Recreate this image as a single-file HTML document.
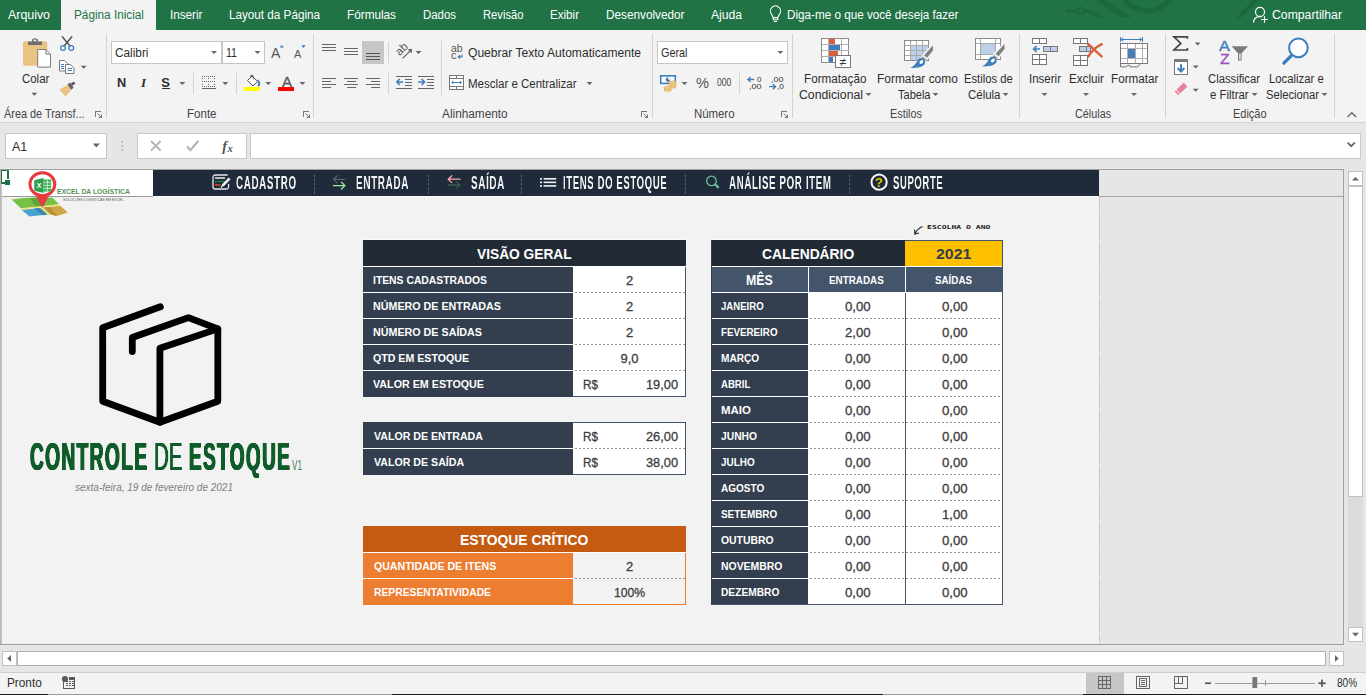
<!DOCTYPE html>
<html lang="pt-BR"><head><meta charset="utf-8"><title>Controle de Estoque</title>
<style>
html,body{margin:0;padding:0;width:1366px;height:695px;overflow:hidden;background:#e6e6e6}
body{position:relative;font-family:'Liberation Sans', sans-serif}
svg.bg{position:absolute;left:0;top:0}
.t{position:absolute;white-space:pre;transform-origin:0 50%}
</style></head><body>
<svg class="bg" width="1366" height="695" viewBox="0 0 1366 695">
<g shape-rendering="crispEdges">
<rect x="0" y="0" width="1366" height="695" fill="#e6e6e6" />
<rect x="0" y="0" width="1366" height="30" fill="#217346" />
<rect x="61" y="0" width="95" height="30" fill="#f3f3f3" />
<rect x="0" y="30" width="1366" height="92" fill="#f3f3f3" />
<rect x="0" y="122" width="1366" height="1" fill="#d4d4d4" />
<rect x="5.5" y="133.5" width="101" height="25" fill="#fff" stroke="#c8c8c8" stroke-width="1"/>
<rect x="137.5" y="133.5" width="109" height="25" fill="#fff" stroke="#c8c8c8" stroke-width="1"/>
<rect x="250.5" y="133.5" width="1110" height="25" fill="#fff" stroke="#c8c8c8" stroke-width="1"/>
<rect x="0" y="169" width="1344" height="476" fill="#a0a0a0" />
<rect x="0" y="170" width="1" height="474" fill="#b8b8b8" />
<rect x="1" y="170" width="1098" height="474" fill="#f2f2f2" />
<rect x="1" y="170" width="1" height="474" fill="#c4c4c4" />
<rect x="1099" y="170" width="244" height="474" fill="#e6e6e6" />
<rect x="1099" y="197" width="1" height="447" fill="#cbcbcb" />
<rect x="1099" y="212" width="1" height="1" fill="#f2f2f2" />
<rect x="1099" y="240" width="1" height="1" fill="#f2f2f2" />
<rect x="1099" y="268" width="1" height="1" fill="#f2f2f2" />
<rect x="1099" y="296" width="1" height="1" fill="#f2f2f2" />
<rect x="1099" y="324" width="1" height="1" fill="#f2f2f2" />
<rect x="1099" y="352" width="1" height="1" fill="#f2f2f2" />
<rect x="1099" y="380" width="1" height="1" fill="#f2f2f2" />
<rect x="1099" y="408" width="1" height="1" fill="#f2f2f2" />
<rect x="1099" y="436" width="1" height="1" fill="#f2f2f2" />
<rect x="1099" y="464" width="1" height="1" fill="#f2f2f2" />
<rect x="1099" y="492" width="1" height="1" fill="#f2f2f2" />
<rect x="1099" y="520" width="1" height="1" fill="#f2f2f2" />
<rect x="1099" y="548" width="1" height="1" fill="#f2f2f2" />
<rect x="1099" y="576" width="1" height="1" fill="#f2f2f2" />
<rect x="1099" y="604" width="1" height="1" fill="#f2f2f2" />
<rect x="1099" y="632" width="1" height="1" fill="#f2f2f2" />
<rect x="2" y="196" width="1341" height="1" fill="#a6a6a6" />
<rect x="2" y="196" width="151" height="1" fill="#9a9a9a" />
<rect x="2" y="170" width="151" height="26" fill="#ffffff" />
<rect x="153" y="170" width="946" height="26" fill="#1f2a3b" />
<rect x="153" y="196" width="946" height="1" fill="#fbfbfb" />
<rect x="0" y="672" width="1366" height="1" fill="#cdcdcd" />
<rect x="0" y="673" width="1366" height="22" fill="#f3f3f3" />
<rect x="1086" y="673" width="38" height="21" fill="#c6c6c6" />
</g>
<g shape-rendering="crispEdges">
<rect x="363" y="239" width="323" height="1" fill="#fafafa" />
<rect x="711" y="239" width="194" height="1" fill="#fafafa" />
<rect x="363" y="240" width="323" height="26" fill="#222b35" />
<rect x="363" y="267" width="210" height="26" fill="#333f4f" />
<rect x="573" y="267" width="113" height="26" fill="#fff" />
<rect x="363" y="266" width="210" height="1" fill="#fff" />
<rect x="363" y="293" width="210" height="26" fill="#333f4f" />
<rect x="573" y="293" width="113" height="26" fill="#fff" />
<rect x="363" y="292" width="210" height="1" fill="#fff" />
<line x1="573" y1="292.5" x2="686" y2="292.5" stroke="#969696" stroke-width="1" stroke-dasharray="2 2" stroke-dashoffset="2"/>
<rect x="363" y="319" width="210" height="26" fill="#333f4f" />
<rect x="573" y="319" width="113" height="26" fill="#fff" />
<rect x="363" y="318" width="210" height="1" fill="#fff" />
<line x1="573" y1="318.5" x2="686" y2="318.5" stroke="#969696" stroke-width="1" stroke-dasharray="2 2" stroke-dashoffset="2"/>
<rect x="363" y="345" width="210" height="26" fill="#333f4f" />
<rect x="573" y="345" width="113" height="26" fill="#fff" />
<rect x="363" y="344" width="210" height="1" fill="#fff" />
<line x1="573" y1="344.5" x2="686" y2="344.5" stroke="#969696" stroke-width="1" stroke-dasharray="2 2" stroke-dashoffset="2"/>
<rect x="363" y="371" width="210" height="26" fill="#333f4f" />
<rect x="573" y="371" width="113" height="26" fill="#fff" />
<rect x="363" y="370" width="210" height="1" fill="#fff" />
<line x1="573" y1="370.5" x2="686" y2="370.5" stroke="#969696" stroke-width="1" stroke-dasharray="2 2" stroke-dashoffset="2"/>
<rect x="363" y="266" width="323" height="1" fill="#fff" />
<rect x="685" y="267" width="1" height="130" fill="#44546a" />
<rect x="573" y="396" width="113" height="1" fill="#44546a" />
<rect x="363" y="396" width="210" height="1" fill="#333f4f" />
<rect x="363" y="422" width="210" height="26" fill="#333f4f" />
<rect x="573" y="422" width="113" height="26" fill="#fff" />
<rect x="363" y="449" width="210" height="26" fill="#333f4f" />
<rect x="573" y="449" width="113" height="26" fill="#fff" />
<rect x="363" y="448" width="210" height="1" fill="#fff" />
<rect x="573" y="448" width="113" height="1" fill="#fff" />
<line x1="573" y1="448.5" x2="686" y2="448.5" stroke="#969696" stroke-width="1" stroke-dasharray="2 2" stroke-dashoffset="2"/>
<rect x="573" y="422" width="113" height="1" fill="#44546a" />
<rect x="685" y="422" width="1" height="53" fill="#44546a" />
<rect x="573" y="474" width="113" height="1" fill="#44546a" />
<rect x="363" y="526" width="323" height="26" fill="#c55a11" />
<rect x="363" y="552" width="323" height="1" fill="#fff" />
<rect x="363" y="553" width="210" height="25" fill="#ed7d31" />
<rect x="363" y="578" width="210" height="1" fill="#fff" />
<rect x="363" y="579" width="210" height="26" fill="#ed7d31" />
<rect x="573" y="553" width="113" height="52" fill="#f2f2f2" />
<line x1="573" y1="578.5" x2="686" y2="578.5" stroke="#969696" stroke-width="1" stroke-dasharray="2 2" stroke-dashoffset="2"/>
<rect x="685" y="553" width="1" height="52" fill="#ed7d31" />
<rect x="573" y="604" width="113" height="1" fill="#ed7d31" />
<rect x="711" y="240" width="194" height="26" fill="#222b35" />
<rect x="905" y="240" width="98" height="26" fill="#ffc000" />
<rect x="711" y="266" width="292" height="1" fill="#fff" />
<rect x="711" y="267" width="292" height="26" fill="#44546a" />
<rect x="808" y="267" width="1" height="26" fill="#fff" />
<rect x="905" y="267" width="1" height="26" fill="#fff" />
<rect x="711" y="293" width="97" height="312" fill="#333f4f" />
<rect x="808" y="293" width="195" height="312" fill="#fff" />
<rect x="711" y="292" width="97" height="1" fill="#fff" />
<rect x="711" y="318" width="97" height="1" fill="#fff" />
<line x1="808" y1="318.5" x2="1003" y2="318.5" stroke="#969696" stroke-width="1" stroke-dasharray="2 2" stroke-dashoffset="2"/>
<rect x="711" y="344" width="97" height="1" fill="#fff" />
<line x1="808" y1="344.5" x2="1003" y2="344.5" stroke="#969696" stroke-width="1" stroke-dasharray="2 2" stroke-dashoffset="2"/>
<rect x="711" y="370" width="97" height="1" fill="#fff" />
<line x1="808" y1="370.5" x2="1003" y2="370.5" stroke="#969696" stroke-width="1" stroke-dasharray="2 2" stroke-dashoffset="2"/>
<rect x="711" y="396" width="97" height="1" fill="#fff" />
<line x1="808" y1="396.5" x2="1003" y2="396.5" stroke="#969696" stroke-width="1" stroke-dasharray="2 2" stroke-dashoffset="2"/>
<rect x="711" y="422" width="97" height="1" fill="#fff" />
<line x1="808" y1="422.5" x2="1003" y2="422.5" stroke="#969696" stroke-width="1" stroke-dasharray="2 2" stroke-dashoffset="2"/>
<rect x="711" y="448" width="97" height="1" fill="#fff" />
<line x1="808" y1="448.5" x2="1003" y2="448.5" stroke="#969696" stroke-width="1" stroke-dasharray="2 2" stroke-dashoffset="2"/>
<rect x="711" y="474" width="97" height="1" fill="#fff" />
<line x1="808" y1="474.5" x2="1003" y2="474.5" stroke="#969696" stroke-width="1" stroke-dasharray="2 2" stroke-dashoffset="2"/>
<rect x="711" y="500" width="97" height="1" fill="#fff" />
<line x1="808" y1="500.5" x2="1003" y2="500.5" stroke="#969696" stroke-width="1" stroke-dasharray="2 2" stroke-dashoffset="2"/>
<rect x="711" y="526" width="97" height="1" fill="#fff" />
<line x1="808" y1="526.5" x2="1003" y2="526.5" stroke="#969696" stroke-width="1" stroke-dasharray="2 2" stroke-dashoffset="2"/>
<rect x="711" y="552" width="97" height="1" fill="#fff" />
<line x1="808" y1="552.5" x2="1003" y2="552.5" stroke="#969696" stroke-width="1" stroke-dasharray="2 2" stroke-dashoffset="2"/>
<rect x="711" y="578" width="97" height="1" fill="#fff" />
<line x1="808" y1="578.5" x2="1003" y2="578.5" stroke="#969696" stroke-width="1" stroke-dasharray="2 2" stroke-dashoffset="2"/>
<rect x="711" y="292" width="292" height="1" fill="#fff" />
<rect x="905" y="293" width="1" height="312" fill="#44546a" />
<rect x="1002" y="240" width="1" height="365" fill="#44546a" />
<rect x="905" y="240" width="98" height="1" fill="#44546a" />
<rect x="711" y="604" width="292" height="1" fill="#44546a" />
<rect x="711" y="240" width="1" height="365" fill="#333f4f" />
</g>
<g fill="none" stroke="#000" stroke-width="6.8" stroke-linecap="round" stroke-linejoin="round"><path d="M160.3 306.8 L102.7 327.8 L102.7 401.2 L159.9 422.2 L217.8 401.2 L217.8 328.9 L188.4 317.6 L132.3 337.5 L132.3 351.5"/><path d="M159.9 422.2 L159.9 348.3 L217.8 328.9"/></g>
<line x1="314.5" y1="174.5" x2="314.5" y2="194" stroke="#566071" stroke-width="1" stroke-dasharray="3 1.2"/>
<line x1="428.4" y1="174.5" x2="428.4" y2="194" stroke="#566071" stroke-width="1" stroke-dasharray="3 1.2"/>
<line x1="521.4" y1="174.5" x2="521.4" y2="194" stroke="#566071" stroke-width="1" stroke-dasharray="3 1.2"/>
<line x1="685.3" y1="174.5" x2="685.3" y2="194" stroke="#566071" stroke-width="1" stroke-dasharray="3 1.2"/>
<line x1="849.7" y1="174.5" x2="849.7" y2="194" stroke="#566071" stroke-width="1" stroke-dasharray="3 1.2"/>
<g fill="none" stroke="#e8e8e8" stroke-width="1.3" stroke-linecap="round" stroke-linejoin="round"><path d="M227.2 175 H215.2 a2.2 2.2 0 0 0 -2.2 2.2 V186.8 a2.2 2.2 0 0 0 2.2 2.2 H226.4 a2.2 2.2 0 0 0 2.2 -2.2 V184.5"/><path d="M215.5 178 H224.5" stroke="#f0f0f0" stroke-width="1.5"/><path d="M215.5 181.5 H224" stroke="#1f7a3a" stroke-width="1.7"/><path d="M215.5 185 H220" stroke="#e8413b" stroke-width="1.7"/><path d="M222.6 185.6 L229.6 178.4" stroke="#f2f2f2" stroke-width="2.6" stroke-linecap="butt"/><path d="M221.3 187 L222.8 185.4" stroke="#f2f2f2" stroke-width="1.2"/></g>
<path d="M333.4 179.4 H345 M345 179.4 l-3.6 3.4 M345 179.4 l-3.6 -3.4" transform="scale(-1,1) translate(-678.4,0)" fill="none" stroke="#5c5f66" stroke-width="1.3" stroke-linecap="round"/>
<path d="M333.4 185.6 H345 M345 185.6 l-3.6 3.4 M345 185.6 l-3.6 -3.4" fill="none" stroke="#9aee9a" stroke-width="1.3" stroke-linecap="round"/>
<path d="M448.2 179.2 H460 M460 179.2 l-3.6 3.4 M460 179.2 l-3.6 -3.4" transform="scale(-1,1) translate(-908.2,0)" fill="none" stroke="#f2a9a9" stroke-width="1.3" stroke-linecap="round"/>
<path d="M448.2 185 H460 M460 185 l-3.6 3.4 M460 185 l-3.6 -3.4" fill="none" stroke="#3d5c52" stroke-width="1.3" stroke-linecap="round"/>
<rect x="540" y="178.0" width="2" height="1.6" fill="#f4f4f4" />
<rect x="543.6" y="178.0" width="12.6" height="1.6" fill="#f4f4f4" />
<rect x="540" y="181.54999999999998" width="2" height="1.6" fill="#f4f4f4" />
<rect x="543.6" y="181.54999999999998" width="12.6" height="1.6" fill="#f4f4f4" />
<rect x="540" y="185.1" width="2" height="1.6" fill="#f4f4f4" />
<rect x="543.6" y="185.1" width="12.6" height="1.6" fill="#f4f4f4" />
<circle cx="711.5" cy="180.9" r="4.8" fill="none" stroke="#6dbf9a" stroke-width="1.3"/><path d="M715.6 184.9 L718 187.1" stroke="#6dbf9a" stroke-width="2.4" stroke-linecap="round"/>
<circle cx="879.1" cy="182.2" r="7.6" fill="none" stroke="#f8f8f8" stroke-width="2"/>
<rect x="106" y="34" width="1" height="84" fill="#d4d4d4" shape-rendering="crispEdges"/>
<rect x="313" y="34" width="1" height="84" fill="#d4d4d4" shape-rendering="crispEdges"/>
<rect x="652" y="34" width="1" height="84" fill="#d4d4d4" shape-rendering="crispEdges"/>
<rect x="792" y="34" width="1" height="84" fill="#d4d4d4" shape-rendering="crispEdges"/>
<rect x="1019" y="34" width="1" height="84" fill="#d4d4d4" shape-rendering="crispEdges"/>
<rect x="1165" y="34" width="1" height="84" fill="#d4d4d4" shape-rendering="crispEdges"/>
<rect x="1334" y="34" width="1" height="84" fill="#d4d4d4" shape-rendering="crispEdges"/>
<rect x="193" y="73" width="1" height="21" fill="#d4d4d4" shape-rendering="crispEdges"/>
<rect x="236" y="73" width="1" height="21" fill="#d4d4d4" shape-rendering="crispEdges"/>
<rect x="388" y="42" width="1" height="21" fill="#d4d4d4" shape-rendering="crispEdges"/>
<rect x="388" y="73" width="1" height="21" fill="#d4d4d4" shape-rendering="crispEdges"/>
<rect x="441" y="41" width="1" height="54" fill="#d4d4d4" shape-rendering="crispEdges"/>
<rect x="739" y="73" width="1" height="21" fill="#d4d4d4" shape-rendering="crispEdges"/>
<path d="M95.5 117 v-5.5 h5.5" fill="none" stroke="#777" stroke-width="1" shape-rendering="crispEdges"/>
<path d="M97.6 113.6 l3.6 3.6 M101.5 117.7 v-3 M101.7 117.5 h-3" fill="none" stroke="#777" stroke-width="1"/>
<path d="M303.5 117 v-5.5 h5.5" fill="none" stroke="#777" stroke-width="1" shape-rendering="crispEdges"/>
<path d="M305.6 113.6 l3.6 3.6 M309.5 117.7 v-3 M309.7 117.5 h-3" fill="none" stroke="#777" stroke-width="1"/>
<path d="M641.5 117 v-5.5 h5.5" fill="none" stroke="#777" stroke-width="1" shape-rendering="crispEdges"/>
<path d="M643.6 113.6 l3.6 3.6 M647.5 117.7 v-3 M647.7 117.5 h-3" fill="none" stroke="#777" stroke-width="1"/>
<path d="M781.5 117 v-5.5 h5.5" fill="none" stroke="#777" stroke-width="1" shape-rendering="crispEdges"/>
<path d="M783.6 113.6 l3.6 3.6 M787.5 117.7 v-3 M787.7 117.5 h-3" fill="none" stroke="#777" stroke-width="1"/>
<path d="M1347.5 117 l4.3 -4.3 l4.3 4.3" fill="none" stroke="#666" stroke-width="1.4"/>
<rect x="23" y="41.2" width="24.2" height="24.6" rx="2" fill="#eac282"/>
<path d="M28 44.9 v-2.4 q0 -1 1 -1 h3 v-1.2 q0 -2 3 -2 q3 0 3 2 v1.2 h3 q1 0 1 1 v2.4z" fill="#6e6e6e"/><rect x="33.6" y="39.6" width="2.8" height="1.6" fill="#f3f3f3"/>
<path d="M37.7 49.5 h8.2 l4.6 4.6 v13 h-12.8z" fill="#fff" stroke="#7d7d7d" stroke-width="1"/><path d="M45.9 49.5 v4.6 h4.6" fill="none" stroke="#7d7d7d" stroke-width="1"/>
<path d="M31.4 92.7 h6 l-3 3z" fill="#666"/>
<path d="M62.3 36.8 L70 46 M71.8 36.8 L64.1 46" stroke="#555" stroke-width="1.5" fill="none" stroke-linecap="round"/><circle cx="63" cy="48" r="2.4" fill="none" stroke="#3e7ebd" stroke-width="1.2"/><circle cx="71.2" cy="48" r="2.4" fill="none" stroke="#3e7ebd" stroke-width="1.2"/>
<g fill="#fff" stroke="#777" stroke-width="1"><path d="M59.5 60.5 h5 l3 3 v7.5 h-8z"/><path d="M65.5 64.5 h5 l3.5 3.5 v5.5 h-8.5z"/></g><path d="M61 64.5 h3 M61 66.5 h3 M61 68.5 h3 M67.5 68.5 h4.5 M67.5 70.5 h4.5" stroke="#3e7ebd" stroke-width="1" fill="none"/>
<path d="M80.6 65.7 h6 l-3 3z" fill="#666"/>
<path d="M59.3 89.6 L68 84.8 L71 90.2 L65.5 96.6z" fill="#eac282"/><path d="M67.5 84.6 l2.6 -2 l3.6 5.2 l-2.6 2z" fill="#666"/><path d="M70.8 83.6 l3 -2.2 l1.6 2.2 l-3 2.2z" fill="#555"/>
<rect x="111.5" y="41.5" width="110" height="22" fill="#fff" stroke="#c6c6c6" stroke-width="1"/>
<rect x="222.5" y="41.5" width="42" height="22" fill="#fff" stroke="#c6c6c6" stroke-width="1"/>
<path d="M211 51.1 h6 l-3 3z" fill="#666"/>
<path d="M254.5 51.1 h6 l-3 3z" fill="#666"/>
<path d="M279.5 47.6 l2.2 -2.6 l2.2 2.6z" fill="#3e7ebd"/>
<path d="M301.3 45.3 h4.4 l-2.2 2.6z" fill="#3e7ebd"/>
<rect x="162" y="88.4" width="8" height="1" fill="#2e2e2e" shape-rendering="crispEdges"/>
<path d="M179.3 82.0 h6 l-3 3z" fill="#666"/>
<g shape-rendering="crispEdges" fill="#6a6a6a">
<rect x="202" y="76" width="1" height="1" fill="#6a6a6a" />
<rect x="204" y="76" width="1" height="1" fill="#6a6a6a" />
<rect x="206" y="76" width="1" height="1" fill="#6a6a6a" />
<rect x="208" y="76" width="1" height="1" fill="#6a6a6a" />
<rect x="210" y="76" width="1" height="1" fill="#6a6a6a" />
<rect x="212" y="76" width="1" height="1" fill="#6a6a6a" />
<rect x="214" y="76" width="1" height="1" fill="#6a6a6a" />
<rect x="202" y="81" width="1" height="1" fill="#6a6a6a" />
<rect x="204" y="81" width="1" height="1" fill="#6a6a6a" />
<rect x="206" y="81" width="1" height="1" fill="#6a6a6a" />
<rect x="208" y="81" width="1" height="1" fill="#6a6a6a" />
<rect x="210" y="81" width="1" height="1" fill="#6a6a6a" />
<rect x="212" y="81" width="1" height="1" fill="#6a6a6a" />
<rect x="214" y="81" width="1" height="1" fill="#6a6a6a" />
<rect x="202" y="86" width="1" height="1" fill="#6a6a6a" />
<rect x="204" y="86" width="1" height="1" fill="#6a6a6a" />
<rect x="206" y="86" width="1" height="1" fill="#6a6a6a" />
<rect x="208" y="86" width="1" height="1" fill="#6a6a6a" />
<rect x="210" y="86" width="1" height="1" fill="#6a6a6a" />
<rect x="212" y="86" width="1" height="1" fill="#6a6a6a" />
<rect x="214" y="86" width="1" height="1" fill="#6a6a6a" />
<rect x="202" y="78" width="1" height="1" fill="#6a6a6a" />
<rect x="208" y="78" width="1" height="1" fill="#6a6a6a" />
<rect x="214" y="78" width="1" height="1" fill="#6a6a6a" />
<rect x="202" y="84" width="1" height="1" fill="#6a6a6a" />
<rect x="208" y="84" width="1" height="1" fill="#6a6a6a" />
<rect x="214" y="84" width="1" height="1" fill="#6a6a6a" />
<rect x="202" y="88" width="14" height="1.3" fill="#666" />
</g>
<path d="M222.3 82.0 h6 l-3 3z" fill="#666"/>
<path d="M247.5 80.5 l4.5 -4.5 l5.5 5.5 l-4.5 4.5z" fill="#fff" stroke="#555" stroke-width="1"/><path d="M250.6 78 v-1.6 a1.3 1.3 0 0 1 2.6 0 v2.8" fill="none" stroke="#555" stroke-width="1"/><path d="M256.8 79.2 Q260.8 80.6 260.1 84.4 Q259.5 86.6 257.6 86.8 Q258.9 82.6 256.8 79.2z" fill="#3e7ebd"/>
<rect x="244" y="87" width="16" height="4" fill="#ffff00" shape-rendering="crispEdges"/>
<path d="M265.3 82.0 h6 l-3 3z" fill="#666"/>
<rect x="278" y="87" width="16" height="4" fill="#ff0000" shape-rendering="crispEdges"/>
<path d="M299.4 82.0 h6 l-3 3z" fill="#666"/>
<rect x="322" y="44" width="14" height="1" fill="#666" shape-rendering="crispEdges"/>
<rect x="322" y="47" width="14" height="1" fill="#666" shape-rendering="crispEdges"/>
<rect x="322" y="50" width="14" height="1" fill="#666" shape-rendering="crispEdges"/>
<rect x="322" y="44" width="14" height="1" fill="#666" shape-rendering="crispEdges"/>
<rect x="322" y="44" width="14" height="1" fill="#666" shape-rendering="crispEdges"/>
<rect x="322" y="47" width="14" height="1" fill="#666" shape-rendering="crispEdges"/>
<rect x="322" y="50" width="14" height="1" fill="#666" shape-rendering="crispEdges"/>
<rect x="344" y="48" width="14" height="1" fill="#666" shape-rendering="crispEdges"/>
<rect x="344" y="51" width="14" height="1" fill="#666" shape-rendering="crispEdges"/>
<rect x="344" y="54" width="14" height="1" fill="#666" shape-rendering="crispEdges"/>
<rect x="362" y="41" width="22" height="23" fill="#c6c6c6" shape-rendering="crispEdges"/>
<rect x="366" y="53" width="14" height="1" fill="#555" shape-rendering="crispEdges"/>
<rect x="366" y="56" width="14" height="1" fill="#555" shape-rendering="crispEdges"/>
<rect x="366" y="59" width="14" height="1" fill="#555" shape-rendering="crispEdges"/>
<path d="M402.6 58.4 L411.2 49.8 M411.6 49.4 l-3.6 0.6 M411.6 49.4 l-0.6 3.6" stroke="#555" stroke-width="1.1" fill="none"/>
<path d="M415.5 50.9 h6 l-3 3z" fill="#666"/>
<path d="M462 54.5 v2.4 h-3.4 M460 55.2 l-1.8 1.7 l1.8 1.7" stroke="#3e7ebd" stroke-width="1.1" fill="none"/>
<rect x="322" y="78" width="14" height="1" fill="#666" shape-rendering="crispEdges"/>
<rect x="344" y="78" width="14" height="1" fill="#666" shape-rendering="crispEdges"/>
<rect x="366" y="78" width="14" height="1" fill="#666" shape-rendering="crispEdges"/>
<rect x="322" y="81" width="9" height="1" fill="#666" shape-rendering="crispEdges"/>
<rect x="346.5" y="81" width="9.0" height="1" fill="#666" shape-rendering="crispEdges"/>
<rect x="371" y="81" width="9" height="1" fill="#666" shape-rendering="crispEdges"/>
<rect x="322" y="84" width="14" height="1" fill="#666" shape-rendering="crispEdges"/>
<rect x="344" y="84" width="14" height="1" fill="#666" shape-rendering="crispEdges"/>
<rect x="366" y="84" width="14" height="1" fill="#666" shape-rendering="crispEdges"/>
<rect x="322" y="87" width="9" height="1" fill="#666" shape-rendering="crispEdges"/>
<rect x="346.5" y="87" width="9.0" height="1" fill="#666" shape-rendering="crispEdges"/>
<rect x="371" y="87" width="9" height="1" fill="#666" shape-rendering="crispEdges"/>
<rect x="396" y="76" width="16" height="1" fill="#666" shape-rendering="crispEdges"/>
<rect x="396" y="88" width="16" height="1" fill="#666" shape-rendering="crispEdges"/>
<rect x="404.5" y="79" width="7.5" height="1" fill="#666" shape-rendering="crispEdges"/>
<rect x="404.5" y="82" width="7.5" height="1" fill="#666" shape-rendering="crispEdges"/>
<rect x="404.5" y="85" width="7.5" height="1" fill="#666" shape-rendering="crispEdges"/>
<rect x="418" y="76" width="16" height="1" fill="#666" shape-rendering="crispEdges"/>
<rect x="418" y="88" width="16" height="1" fill="#666" shape-rendering="crispEdges"/>
<rect x="426.5" y="79" width="7.5" height="1" fill="#666" shape-rendering="crispEdges"/>
<rect x="426.5" y="82" width="7.5" height="1" fill="#666" shape-rendering="crispEdges"/>
<rect x="426.5" y="85" width="7.5" height="1" fill="#666" shape-rendering="crispEdges"/>
<path d="M403.2 82 H397 M399.8 79 l-3 3 l3 3" stroke="#3e7ebd" stroke-width="1.6" fill="none"/>
<path d="M418.2 82 H424.4 M421.6 79 l3 3 l-3 3" stroke="#3e7ebd" stroke-width="1.6" fill="none"/>
<g shape-rendering="crispEdges" fill="none" stroke="#777" stroke-width="1"><rect x="449.5" y="75.5" width="14" height="14" fill="#fff"/><path d="M449.5 78.5 h14 M449.5 86.5 h14 M456.5 75.5 v3 M456.5 86.5 v3"/></g><path d="M451.8 82.5 h9.6 M453.4 81 l-1.6 1.5 l1.6 1.5 M459.8 81 l1.6 1.5 l-1.6 1.5" stroke="#3e7ebd" stroke-width="1" fill="none"/>
<path d="M586.5 82.0 h6 l-3 3z" fill="#666"/>
<rect x="657.5" y="41.5" width="130" height="22" fill="#fff" stroke="#c6c6c6" stroke-width="1"/>
<path d="M777.3 51.1 h6 l-3 3z" fill="#666"/>
<rect x="660.7" y="75.8" width="14.6" height="7.6" fill="#fff" stroke="#3e7ebd" stroke-width="1.6"/><circle cx="668" cy="79.6" r="2.3" fill="#3e7ebd"/><path d="M668 79.6 L668 77.3 A2.3 2.3 0 0 1 670.3 79.6z" fill="#fff"/><g fill="#f0d29a" stroke="#e3ad55" stroke-width="0.9"><ellipse cx="672.4" cy="86.8" rx="3.8" ry="1.3"/><ellipse cx="672.4" cy="84.6" rx="3.8" ry="1.3"/><ellipse cx="672.4" cy="82.4" rx="3.8" ry="1.3"/><ellipse cx="667.6" cy="90" rx="3.8" ry="1.3"/><ellipse cx="667.6" cy="87.8" rx="3.8" ry="1.3"/></g>
<path d="M681.5 82.0 h6 l-3 3z" fill="#666"/>
<path d="M754.2 79.5 h-6.4 M750.6 77 l-2.8 2.5 l2.8 2.5" stroke="#3e7ebd" stroke-width="1.3" fill="none"/>
<path d="M769.2 86.7 h6.4 M772.8 84.2 l2.8 2.5 l-2.8 2.5" stroke="#3e7ebd" stroke-width="1.3" fill="none"/>
<g shape-rendering="crispEdges">
<rect x="821.5" y="38.5" width="27" height="24" fill="#fff" stroke="#8a8a8a"/>
<path d="M821.5 44.5 h27 M821.5 50.5 h27 M821.5 56.5 h27 M828.5 38.5 v24 M841.5 38.5 v24" stroke="#b0b0b0" fill="none"/>
<rect x="829" y="39" width="6" height="5" fill="#d9603b" />
<rect x="829" y="45" width="11" height="5" fill="#3e7ebd" />
<rect x="829" y="51" width="9" height="5" fill="#d9603b" />
<rect x="829" y="57" width="4" height="5" fill="#3e7ebd" />
<rect x="835.5" y="55.5" width="15" height="12" fill="#fff" stroke="#777"/>
<rect x="904.5" y="40.5" width="24" height="20" fill="#fff" stroke="#8a8a8a"/>
<rect x="911" y="46" width="17" height="14" fill="#bdd0e9" />
<path d="M904.5 45.5 h24 M904.5 50.5 h24 M904.5 55.5 h24 M910.5 40.5 v20 M916.5 40.5 v20 M922.5 40.5 v20" stroke="#a8a8a8" fill="none"/>
<rect x="975.5" y="38.5" width="25" height="21" fill="#fff" stroke="#8a8a8a"/>
<rect x="981" y="44" width="14" height="10" fill="#bdd0e9" />
<path d="M975.5 43.5 h25 M975.5 54.5 h25 M980.5 38.5 v21 M995.5 38.5 v21" stroke="#a8a8a8" fill="none"/>
</g>
<g transform="translate(0,0)"><path d="M933.8 43.4 L933.8 50.8 L927.2 58.8 L922.8 55.4z" fill="#7f7f7f" stroke="#f3f3f3" stroke-width="1.6"/><path d="M922.6 56.2 L926.4 59.2 L924.6 61.4 L920.8 58.4z" fill="#8c8c8c" stroke="#f3f3f3" stroke-width="0.8"/><path d="M910.4 68 C914.6 66 917 62.6 918 59.6 C920.2 56.8 925.6 59 925.2 62.6 C924.6 66.6 919 68.4 910.4 68z" fill="#3e7ebd"/><ellipse cx="921.4" cy="62" rx="2.2" ry="1.5" transform="rotate(-40 921.4 62)" fill="#fff"/></g>
<g transform="translate(71.5,-1.5)"><path d="M933.8 43.4 L933.8 50.8 L927.2 58.8 L922.8 55.4z" fill="#7f7f7f" stroke="#f3f3f3" stroke-width="1.6"/><path d="M922.6 56.2 L926.4 59.2 L924.6 61.4 L920.8 58.4z" fill="#8c8c8c" stroke="#f3f3f3" stroke-width="0.8"/><path d="M910.4 68 C914.6 66 917 62.6 918 59.6 C920.2 56.8 925.6 59 925.2 62.6 C924.6 66.6 919 68.4 910.4 68z" fill="#3e7ebd"/><ellipse cx="921.4" cy="62" rx="2.2" ry="1.5" transform="rotate(-40 921.4 62)" fill="#fff"/></g>
<path d="M865.5 92.9 h6 l-3 3z" fill="#666"/>
<path d="M932.5 92.9 h6 l-3 3z" fill="#666"/>
<path d="M1002.5 92.9 h6 l-3 3z" fill="#666"/>
<g shape-rendering="crispEdges" fill="#fff" stroke="#777">
<rect x="1032.5" y="38.5" width="14" height="5"/><path d="M1039.5 38.5 v5"/>
<rect x="1032.5" y="54.5" width="14" height="10"/><path d="M1039.5 54.5 v10 M1032.5 59.5 h14"/>
<rect x="1043.5" y="46.5" width="14" height="5" fill="#bdd0e9"/><path d="M1050.5 46.5 v5"/>
<rect x="1073.5" y="38.5" width="14" height="5"/><path d="M1080.5 38.5 v5"/>
<rect x="1073.5" y="55.5" width="14" height="10"/><path d="M1080.5 55.5 v10 M1073.5 60.5 h14"/>
<rect x="1079.5" y="46.5" width="11" height="5" fill="#bdd0e9"/><path d="M1086.5 46.5 v5"/>
<rect x="1120.5" y="43.5" width="27" height="20"/><path d="M1127.5 43.5 v20 M1135.5 43.5 v20 M1142.5 43.5 v20 M1120.5 48.5 h27 M1120.5 58.5 h27" stroke="#b0b0b0"/><rect x="1120.5" y="43.5" width="27" height="20" fill="none"/>
<rect x="1128" y="49" width="7" height="9" fill="#4a7ebb" stroke="none"/>
</g>
<path d="M1120.5 63.5 v3.4 h6 l1.2 -1.6 h1.6 M1130 65 v1.9 h7.6 l2.6 -3.2" fill="none" stroke="#777" stroke-width="1"/>
<path d="M1040 49 h-6.4 M1036.6 46.2 l-3 2.8 l3 2.8" stroke="#3e7ebd" stroke-width="1.6" fill="none"/>
<path d="M1088 44 L1101.6 56.4 M1101.8 44.2 Q1093 48.5 1088.2 56.6" stroke="#d9603b" stroke-width="2.4" fill="none" stroke-linecap="round"/>
<path d="M1121 39.5 h21 M1123.4 37.6 l-2.2 1.9 l2.2 1.9 M1139.6 37.6 l2.2 1.9 l-2.2 1.9 M1120.5 37 v5 M1142.6 37 v5" stroke="#3e7ebd" stroke-width="1" fill="none"/>
<path d="M1041.5 92.9 h6 l-3 3z" fill="#666"/>
<path d="M1083 92.9 h6 l-3 3z" fill="#666"/>
<path d="M1131 92.9 h6 l-3 3z" fill="#666"/>
<path d="M1187.4 38.8 V36.8 H1174 L1180.8 43.4 L1174 50 H1187.4 V48" fill="none" stroke="#444" stroke-width="1.7" stroke-linejoin="miter"/>
<path d="M1194.6 42.5 h6 l-3 3z" fill="#666"/>
<g shape-rendering="crispEdges"><rect x="1174.5" y="59.5" width="13" height="15" fill="#fff" stroke="#777"/><rect x="1174" y="59" width="14" height="3.4" fill="#7a7a7a"/></g><path d="M1181 64.2 v7.2 M1177.6 68 l3.4 3.6 l3.4 -3.6" stroke="#3e7ebd" stroke-width="2" fill="none"/>
<path d="M1192.7 65.6 h6 l-3 3z" fill="#666"/>
<path d="M1176.6 89.6 L1183.8 82.8 L1187.4 86.6 L1180.2 93.4z" fill="#e8829a"/><path d="M1174.6 91.5 L1175.9 90.3 L1179.5 94.1 L1178.2 95.3z" fill="#e8829a"/>
<path d="M1192.7 88.7 h6 l-3 3z" fill="#666"/>
<path d="M1231.6 46.2 h16.4 l-6.4 7 v7.4 h-3.6 v-7.4z" fill="#7a7a7a"/><path d="M1239.2 53.6 h1.4 v6 h-1.4z" fill="#f3f3f3"/>
<circle cx="1298.4" cy="47.9" r="9.3" fill="#fff" stroke="#3e7ebd" stroke-width="2"/><path d="M1291 56 L1283.8 63.2" stroke="#3e7ebd" stroke-width="3.2" stroke-linecap="round"/>
<path d="M1251.6 92.9 h6 l-3 3z" fill="#666"/>
<path d="M1321.5 92.9 h6 l-3 3z" fill="#666"/>
<clipPath id="tc"><rect x="1040" y="0" width="240" height="17.5"/></clipPath><g clip-path="url(#tc)" fill="none" stroke="#1c683d"><path d="M1066 10.9 H1077" stroke-width="3.4"/><circle cx="1080.4" cy="10.9" r="3.2" stroke-width="2.4"/><path d="M1084 10.6 Q1090 10.6 1095 14.5 L1102 19" stroke-width="3.4"/><path d="M1099 -1 L1129 19" stroke-width="6"/><circle cx="1147.2" cy="-18" r="28.7" stroke-width="5"/><path d="M1257 -1 L1237.5 19" stroke-width="4"/></g>
<path d="M773.2 17.6 L771.7 14.4 A5.1 5.1 0 1 1 779.3 14.4 L777.8 17.6 Z M773.2 17.6 V19.7 H777.8 V17.6 M773.9 21.5 H777.1" fill="none" stroke="#fff" stroke-width="1.1" stroke-linejoin="round"/>
<g fill="none" stroke="#fff" stroke-width="1.2"><circle cx="1260" cy="11.9" r="4.5"/><path d="M1253.4 22.6 Q1254 17.4 1258.6 16.6 H1262"/><path d="M1261.2 19.5 h6.6 M1264.5 16.2 v6.6"/></g>
<path d="M92.8 143.6 h7 l-3.5 4z" fill="#666"/>
<rect x="121.5" y="141" width="1.6" height="1.6" fill="#a8a8a8" />
<rect x="121.5" y="145" width="1.6" height="1.6" fill="#a8a8a8" />
<rect x="121.5" y="149" width="1.6" height="1.6" fill="#a8a8a8" />
<path d="M151 141 l9.6 9.6 M160.6 141 l-9.6 9.6" stroke="#b4b4b4" stroke-width="1.9" fill="none"/>
<path d="M187 146.4 l3.4 3.8 l8 -9.4" stroke="#b4b4b4" stroke-width="2.2" fill="none"/>
<path d="M1347.6 142.6 l3.6 3.6 l3.6 -3.6" stroke="#666" stroke-width="1.8" fill="none"/>
<g shape-rendering="crispEdges">
<rect x="1348" y="171" width="15" height="470" fill="#dcdcdc" />
<rect x="1348.5" y="171.5" width="14" height="14" fill="#fff" stroke="#c0c0c0" stroke-width="1"/>
<rect x="1348.5" y="186.5" width="14" height="310" fill="#fff" stroke="#c0c0c0" stroke-width="1"/>
<rect x="1348.5" y="627.5" width="14" height="14" fill="#fff" stroke="#c0c0c0" stroke-width="1"/>
<rect x="2.5" y="651.5" width="14" height="14" fill="#fff" stroke="#c0c0c0" stroke-width="1"/>
<rect x="17.5" y="651.5" width="1308" height="14" fill="#fff" stroke="#b0b0b0" stroke-width="1"/>
<rect x="1329.5" y="651.5" width="14" height="14" fill="#fff" stroke="#c0c0c0" stroke-width="1"/>
</g>
<path d="M1352 180.5 h7 l-3.5 -3.6z" fill="#666"/><path d="M1352 632.8 h7 l-3.5 3.6z" fill="#666"/>
<path d="M11 655 v7 l-3.8 -3.5z" fill="#666"/><path d="M1335 655 v7 l3.6 -3.5z" fill="#666"/>
<g shape-rendering="crispEdges"><path d="M63.5 682 V688.5 H74.5 V678 H69" stroke="#5a5a5a" fill="none"/><rect x="69" y="677" width="6" height="3" fill="#5a5a5a"/><path d="M66 683.5 h2 M69 683.5 h2 M72 683.5 h2 M66 685.5 h2 M69 685.5 h2 M72 685.5 h2 M66 681.5 h2 M69 681.5 h2 M72 681.5 h2" stroke="#5a5a5a" fill="none"/></g><circle cx="65" cy="679" r="3.1" fill="#5a5a5a"/>
<g shape-rendering="crispEdges" fill="none" stroke="#666"><rect x="1098.5" y="676.5" width="12" height="12" stroke-width="1"/><path d="M1102.5 676.5 v12 M1106.5 676.5 v12 M1098.5 680.5 h12 M1098.5 684.5 h12"/><rect x="1136.5" y="676.5" width="13" height="12"/><rect x="1139.5" y="678.5" width="7" height="8"/><path d="M1141 680.5 h4 M1141 682.5 h4 M1141 684.5 h4"/><path d="M1174.5 676.5 h13 v12 h-13z M1178.5 676.5 v7 M1182.5 676.5 v7 M1174.5 683.5 h8.5"/></g>
<rect x="1205" y="682.4" width="6" height="1.7" fill="#555" />
<rect x="1215" y="683" width="100" height="1" fill="#9a9a9a" shape-rendering="crispEdges"/>
<rect x="1252.4" y="677" width="4.8" height="11" fill="#777" />
<rect x="1265" y="680" width="1" height="6" fill="#9a9a9a" shape-rendering="crispEdges"/>
<rect x="1318.4" y="682.4" width="7.2" height="1.7" fill="#555" />
<rect x="1321.15" y="679.6" width="1.7" height="7.2" fill="#555" />
<g shape-rendering="crispEdges">
<rect x="0" y="694" width="48" height="1" fill="#1a1a1a" />
<rect x="48" y="694" width="344" height="1" fill="#9a9a9a" />
<rect x="392" y="694" width="491" height="1" fill="#1a1a1a" />
<rect x="883" y="694" width="200" height="1" fill="#9a9a9a" />
<rect x="1083" y="694" width="283" height="1" fill="#1a1a1a" />
</g>
<g shape-rendering="crispEdges">
<rect x="1" y="170" width="1.2" height="13.5" fill="#1e7145" />
<rect x="1" y="170" width="7.8" height="1.2" fill="#1e7145" />
<rect x="1" y="182.4" width="3.6" height="1.2" fill="#1e7145" />
<rect x="7" y="170" width="1.8" height="8.5" fill="#1e7145" />
<rect x="5" y="180" width="5" height="4.6" fill="#1e7145" />
</g>
<path d="M11.7 199.4 L24 198 L40 197.5 L52.5 197.7 L59.2 204.4 L21 208.4z" fill="#76c043"/><path d="M30 198 L40 197.5 L46 206 L36 207z" fill="#5fa63a"/><path d="M20.4 208.3 L59 204.2 L60 205.6 L21.6 209.8z" fill="#f2e47c"/><path d="M21.8 209.9 L40 207.9 L47.6 214.6 L29.4 216.6z" fill="#4aa3d0"/><path d="M34 208.6 L40 207.9 L47.6 214.6 L43 215.2z" fill="#3b86b3"/><path d="M40.4 207.8 L42.8 207.5 L50.6 214.6 L48 214.9z" fill="#e8da6e"/><path d="M43.4 207.4 L60.2 205.7 L67.8 212.4 L57 216 L50.8 214.6z" fill="#cfa545"/><path d="M43.4 207.4 L50 206.8 L57 216 L50.8 214.6z" fill="#b88f3a"/>
<path d="M36.2 196.4 L48.6 196.4 L42.4 207.8z" fill="#e8393f"/><ellipse cx="42.4" cy="184.3" rx="12.4" ry="11.5" fill="#fff" stroke="#e8393f" stroke-width="3"/>
<path d="M34.2 180.2 L43.6 178 V193 L34.2 190.8z" fill="#2fa04b"/><rect x="43.6" y="179.4" width="7.6" height="12.2" fill="#3cb55a"/><path d="M43.6 182.4 h7.6 M43.6 185.4 h7.6 M43.6 188.4 h7.6 M47.4 179.4 v12.2" stroke="#d9f2df" stroke-width="0.8" fill="none"/>
<path d="M922.4 226.4 Q917.4 228.4 915 233.6 M914.6 229.6 L914.8 234 L919 233" fill="none" stroke="#222" stroke-width="1.1"/>
</svg>
<span class="t" style="left:8.00px;top:8px;font-size:12px;color:#fff;transform:scaleX(1.0323);line-height:14px;height:14px;">Arquivo</span>
<span class="t" style="left:73.50px;top:8px;font-size:12px;color:#217346;transform:scaleX(0.9805);line-height:14px;height:14px;">Página Inicial</span>
<span class="t" style="left:170.00px;top:8px;font-size:12px;color:#fff;transform:scaleX(0.9747);line-height:14px;height:14px;">Inserir</span>
<span class="t" style="left:229.00px;top:8px;font-size:12px;color:#fff;transform:scaleX(0.9741);line-height:14px;height:14px;">Layout da Página</span>
<span class="t" style="left:347.00px;top:8px;font-size:12px;color:#fff;transform:scaleX(0.9797);line-height:14px;height:14px;">Fórmulas</span>
<span class="t" style="left:423.00px;top:8px;font-size:12px;color:#fff;transform:scaleX(0.9514);line-height:14px;height:14px;">Dados</span>
<span class="t" style="left:483.00px;top:8px;font-size:12px;color:#fff;transform:scaleX(0.9341);line-height:14px;height:14px;">Revisão</span>
<span class="t" style="left:550.00px;top:8px;font-size:12px;color:#fff;transform:scaleX(0.9662);line-height:14px;height:14px;">Exibir</span>
<span class="t" style="left:606.00px;top:8px;font-size:12px;color:#fff;transform:scaleX(0.9807);line-height:14px;height:14px;">Desenvolvedor</span>
<span class="t" style="left:711.00px;top:8px;font-size:12px;color:#fff;transform:scaleX(1.0097);line-height:14px;height:14px;">Ajuda</span>
<span class="t" style="left:787.00px;top:8px;font-size:12px;color:#fff;transform:scaleX(0.9738);line-height:14px;height:14px;">Diga-me o que você deseja fazer</span>
<span class="t" style="left:1272.00px;top:8px;font-size:12px;color:#fff;transform:scaleX(1.0189);line-height:14px;height:14px;">Compartilhar</span>
<span class="t" style="left:477.00px;top:245px;font-size:15.5px;color:#fff;font-weight:700;transform:scaleX(0.8867);line-height:17px;height:17px;">VISÃO GERAL</span>
<span class="t" style="left:373.00px;top:273px;font-size:11.8px;color:#fff;font-weight:700;transform:scaleX(0.8784);line-height:14px;height:14px;">ITENS CADASTRADOS</span>
<span class="t" style="left:373.00px;top:299px;font-size:11.8px;color:#fff;font-weight:700;transform:scaleX(0.9083);line-height:14px;height:14px;">NÚMERO DE ENTRADAS</span>
<span class="t" style="left:373.00px;top:325px;font-size:11.8px;color:#fff;font-weight:700;transform:scaleX(0.9087);line-height:14px;height:14px;">NÚMERO DE SAÍDAS</span>
<span class="t" style="left:373.00px;top:351px;font-size:11.8px;color:#fff;font-weight:700;transform:scaleX(0.9004);line-height:14px;height:14px;">QTD EM ESTOQUE</span>
<span class="t" style="left:373.00px;top:377px;font-size:11.8px;color:#fff;font-weight:700;transform:scaleX(0.9088);line-height:14px;height:14px;">VALOR EM ESTOQUE</span>
<span class="t" style="left:625.88px;top:273px;font-size:13px;color:#3c3c3c;line-height:15px;height:15px;-webkit-text-stroke:0.3px #3c3c3c;">2</span>
<span class="t" style="left:625.88px;top:299px;font-size:13px;color:#3c3c3c;line-height:15px;height:15px;-webkit-text-stroke:0.3px #3c3c3c;">2</span>
<span class="t" style="left:625.88px;top:325px;font-size:13px;color:#3c3c3c;line-height:15px;height:15px;-webkit-text-stroke:0.3px #3c3c3c;">2</span>
<span class="t" style="left:620.46px;top:351px;font-size:13px;color:#3c3c3c;line-height:15px;height:15px;-webkit-text-stroke:0.3px #3c3c3c;">9,0</span>
<span class="t" style="left:582.50px;top:377px;font-size:13px;color:#3c3c3c;transform:scaleX(0.9023);line-height:15px;height:15px;-webkit-text-stroke:0.3px #3c3c3c;">R$</span>
<span class="t" style="left:646.00px;top:377px;font-size:13px;color:#3c3c3c;transform:scaleX(0.9832);line-height:15px;height:15px;-webkit-text-stroke:0.3px #3c3c3c;">19,00</span>
<span class="t" style="left:373.50px;top:429px;font-size:11.8px;color:#fff;font-weight:700;transform:scaleX(0.8998);line-height:14px;height:14px;">VALOR DE ENTRADA</span>
<span class="t" style="left:373.50px;top:455px;font-size:11.8px;color:#fff;font-weight:700;transform:scaleX(0.9004);line-height:14px;height:14px;">VALOR DE SAÍDA</span>
<span class="t" style="left:582.50px;top:429px;font-size:13px;color:#3c3c3c;transform:scaleX(0.9023);line-height:15px;height:15px;-webkit-text-stroke:0.3px #3c3c3c;">R$</span>
<span class="t" style="left:646.00px;top:429px;font-size:13px;color:#3c3c3c;transform:scaleX(0.9832);line-height:15px;height:15px;-webkit-text-stroke:0.3px #3c3c3c;">26,00</span>
<span class="t" style="left:582.50px;top:455px;font-size:13px;color:#3c3c3c;transform:scaleX(0.9023);line-height:15px;height:15px;-webkit-text-stroke:0.3px #3c3c3c;">R$</span>
<span class="t" style="left:646.00px;top:455px;font-size:13px;color:#3c3c3c;transform:scaleX(0.9832);line-height:15px;height:15px;-webkit-text-stroke:0.3px #3c3c3c;">38,00</span>
<span class="t" style="left:460.30px;top:531px;font-size:15.5px;color:#fff;font-weight:700;transform:scaleX(0.8945);line-height:17px;height:17px;">ESTOQUE CRÍTICO</span>
<span class="t" style="left:373.50px;top:559px;font-size:11.8px;color:#fff;font-weight:700;transform:scaleX(0.8964);line-height:14px;height:14px;">QUANTIDADE DE ITENS</span>
<span class="t" style="left:373.50px;top:585px;font-size:11.8px;color:#fff;font-weight:700;transform:scaleX(0.8735);line-height:14px;height:14px;">REPRESENTATIVIDADE</span>
<span class="t" style="left:625.88px;top:559px;font-size:13px;color:#3c3c3c;line-height:15px;height:15px;-webkit-text-stroke:0.3px #3c3c3c;">2</span>
<span class="t" style="left:614.40px;top:585px;font-size:13px;color:#3c3c3c;transform:scaleX(0.9383);line-height:15px;height:15px;-webkit-text-stroke:0.3px #3c3c3c;">100%</span>
<span class="t" style="left:762.00px;top:245px;font-size:15.5px;color:#fff;font-weight:700;transform:scaleX(0.8922);line-height:17px;height:17px;">CALENDÁRIO</span>
<span class="t" style="left:936.00px;top:245px;font-size:15.5px;color:#333f4f;font-weight:700;transform:scaleX(1.0237);line-height:17px;height:17px;">2021</span>
<span class="t" style="left:746.30px;top:271px;font-size:15px;color:#fff;font-weight:700;transform:scaleX(0.8211);line-height:17px;height:17px;">MÊS</span>
<span class="t" style="left:829.00px;top:273px;font-size:11.8px;color:#fff;font-weight:700;transform:scaleX(0.8345);line-height:14px;height:14px;">ENTRADAS</span>
<span class="t" style="left:935.00px;top:273px;font-size:11.8px;color:#fff;font-weight:700;transform:scaleX(0.8300);line-height:14px;height:14px;">SAÍDAS</span>
<span class="t" style="left:720.80px;top:299px;font-size:11.8px;color:#fff;font-weight:700;transform:scaleX(0.8122);line-height:14px;height:14px;">JANEIRO</span>
<span class="t" style="left:844.50px;top:299px;font-size:13px;color:#3c3c3c;transform:scaleX(1.0153);line-height:15px;height:15px;-webkit-text-stroke:0.3px #3c3c3c;">0,00</span>
<span class="t" style="left:941.50px;top:299px;font-size:13px;color:#3c3c3c;transform:scaleX(1.0153);line-height:15px;height:15px;-webkit-text-stroke:0.3px #3c3c3c;">0,00</span>
<span class="t" style="left:720.80px;top:325px;font-size:11.8px;color:#fff;font-weight:700;transform:scaleX(0.8286);line-height:14px;height:14px;">FEVEREIRO</span>
<span class="t" style="left:844.50px;top:325px;font-size:13px;color:#3c3c3c;transform:scaleX(1.0153);line-height:15px;height:15px;-webkit-text-stroke:0.3px #3c3c3c;">2,00</span>
<span class="t" style="left:941.50px;top:325px;font-size:13px;color:#3c3c3c;transform:scaleX(1.0153);line-height:15px;height:15px;-webkit-text-stroke:0.3px #3c3c3c;">0,00</span>
<span class="t" style="left:720.80px;top:351px;font-size:11.8px;color:#fff;font-weight:700;transform:scaleX(0.8572);line-height:14px;height:14px;">MARÇO</span>
<span class="t" style="left:844.50px;top:351px;font-size:13px;color:#3c3c3c;transform:scaleX(1.0153);line-height:15px;height:15px;-webkit-text-stroke:0.3px #3c3c3c;">0,00</span>
<span class="t" style="left:941.50px;top:351px;font-size:13px;color:#3c3c3c;transform:scaleX(1.0153);line-height:15px;height:15px;-webkit-text-stroke:0.3px #3c3c3c;">0,00</span>
<span class="t" style="left:720.80px;top:377px;font-size:11.8px;color:#fff;font-weight:700;transform:scaleX(0.8128);line-height:14px;height:14px;">ABRIL</span>
<span class="t" style="left:844.50px;top:377px;font-size:13px;color:#3c3c3c;transform:scaleX(1.0153);line-height:15px;height:15px;-webkit-text-stroke:0.3px #3c3c3c;">0,00</span>
<span class="t" style="left:941.50px;top:377px;font-size:13px;color:#3c3c3c;transform:scaleX(1.0153);line-height:15px;height:15px;-webkit-text-stroke:0.3px #3c3c3c;">0,00</span>
<span class="t" style="left:720.80px;top:403px;font-size:11.8px;color:#fff;font-weight:700;transform:scaleX(0.9704);line-height:14px;height:14px;">MAIO</span>
<span class="t" style="left:844.50px;top:403px;font-size:13px;color:#3c3c3c;transform:scaleX(1.0153);line-height:15px;height:15px;-webkit-text-stroke:0.3px #3c3c3c;">0,00</span>
<span class="t" style="left:941.50px;top:403px;font-size:13px;color:#3c3c3c;transform:scaleX(1.0153);line-height:15px;height:15px;-webkit-text-stroke:0.3px #3c3c3c;">0,00</span>
<span class="t" style="left:720.80px;top:429px;font-size:11.8px;color:#fff;font-weight:700;transform:scaleX(0.8717);line-height:14px;height:14px;">JUNHO</span>
<span class="t" style="left:844.50px;top:429px;font-size:13px;color:#3c3c3c;transform:scaleX(1.0153);line-height:15px;height:15px;-webkit-text-stroke:0.3px #3c3c3c;">0,00</span>
<span class="t" style="left:941.50px;top:429px;font-size:13px;color:#3c3c3c;transform:scaleX(1.0153);line-height:15px;height:15px;-webkit-text-stroke:0.3px #3c3c3c;">0,00</span>
<span class="t" style="left:720.80px;top:455px;font-size:11.8px;color:#fff;font-weight:700;transform:scaleX(0.8403);line-height:14px;height:14px;">JULHO</span>
<span class="t" style="left:844.50px;top:455px;font-size:13px;color:#3c3c3c;transform:scaleX(1.0153);line-height:15px;height:15px;-webkit-text-stroke:0.3px #3c3c3c;">0,00</span>
<span class="t" style="left:941.50px;top:455px;font-size:13px;color:#3c3c3c;transform:scaleX(1.0153);line-height:15px;height:15px;-webkit-text-stroke:0.3px #3c3c3c;">0,00</span>
<span class="t" style="left:720.80px;top:481px;font-size:11.8px;color:#fff;font-weight:700;transform:scaleX(0.8484);line-height:14px;height:14px;">AGOSTO</span>
<span class="t" style="left:844.50px;top:481px;font-size:13px;color:#3c3c3c;transform:scaleX(1.0153);line-height:15px;height:15px;-webkit-text-stroke:0.3px #3c3c3c;">0,00</span>
<span class="t" style="left:941.50px;top:481px;font-size:13px;color:#3c3c3c;transform:scaleX(1.0153);line-height:15px;height:15px;-webkit-text-stroke:0.3px #3c3c3c;">0,00</span>
<span class="t" style="left:720.80px;top:507px;font-size:11.8px;color:#fff;font-weight:700;transform:scaleX(0.8406);line-height:14px;height:14px;">SETEMBRO</span>
<span class="t" style="left:844.50px;top:507px;font-size:13px;color:#3c3c3c;transform:scaleX(1.0153);line-height:15px;height:15px;-webkit-text-stroke:0.3px #3c3c3c;">0,00</span>
<span class="t" style="left:941.50px;top:507px;font-size:13px;color:#3c3c3c;transform:scaleX(1.0153);line-height:15px;height:15px;-webkit-text-stroke:0.3px #3c3c3c;">1,00</span>
<span class="t" style="left:720.80px;top:533px;font-size:11.8px;color:#fff;font-weight:700;transform:scaleX(0.8819);line-height:14px;height:14px;">OUTUBRO</span>
<span class="t" style="left:844.50px;top:533px;font-size:13px;color:#3c3c3c;transform:scaleX(1.0153);line-height:15px;height:15px;-webkit-text-stroke:0.3px #3c3c3c;">0,00</span>
<span class="t" style="left:941.50px;top:533px;font-size:13px;color:#3c3c3c;transform:scaleX(1.0153);line-height:15px;height:15px;-webkit-text-stroke:0.3px #3c3c3c;">0,00</span>
<span class="t" style="left:720.80px;top:559px;font-size:11.8px;color:#fff;font-weight:700;transform:scaleX(0.8837);line-height:14px;height:14px;">NOVEMBRO</span>
<span class="t" style="left:844.50px;top:559px;font-size:13px;color:#3c3c3c;transform:scaleX(1.0153);line-height:15px;height:15px;-webkit-text-stroke:0.3px #3c3c3c;">0,00</span>
<span class="t" style="left:941.50px;top:559px;font-size:13px;color:#3c3c3c;transform:scaleX(1.0153);line-height:15px;height:15px;-webkit-text-stroke:0.3px #3c3c3c;">0,00</span>
<span class="t" style="left:720.80px;top:585px;font-size:11.8px;color:#fff;font-weight:700;transform:scaleX(0.8650);line-height:14px;height:14px;">DEZEMBRO</span>
<span class="t" style="left:844.50px;top:585px;font-size:13px;color:#3c3c3c;transform:scaleX(1.0153);line-height:15px;height:15px;-webkit-text-stroke:0.3px #3c3c3c;">0,00</span>
<span class="t" style="left:941.50px;top:585px;font-size:13px;color:#3c3c3c;transform:scaleX(1.0153);line-height:15px;height:15px;-webkit-text-stroke:0.3px #3c3c3c;">0,00</span>
<span class="t" style="left:29.60px;top:435px;font-size:38.4px;color:#0f5c2a;font-weight:700;transform:scaleX(0.4946);line-height:43px;height:43px;will-change:transform;letter-spacing:3px;margin-right:-3px;text-shadow:0.6px 0 0 #0f5c2a,-0.6px 0 0 #0f5c2a,1.2px 0 0 #0f5c2a,-1.2px 0 0 #0f5c2a;">CONTROLE</span>
<span class="t" style="left:153.80px;top:435px;font-size:38.4px;color:#0f5c2a;transform:scaleX(0.5324);line-height:43px;height:43px;will-change:transform;text-shadow:0.8px 0 0 #0f5c2a,-0.8px 0 0 #0f5c2a;">DE</span>
<span class="t" style="left:189.20px;top:435px;font-size:38.4px;color:#0f5c2a;font-weight:700;transform:scaleX(0.4913);line-height:43px;height:43px;will-change:transform;letter-spacing:3px;margin-right:-3px;text-shadow:0.6px 0 0 #0f5c2a,-0.6px 0 0 #0f5c2a,1.2px 0 0 #0f5c2a,-1.2px 0 0 #0f5c2a;">ESTOQUE</span>
<span class="t" style="left:292.30px;top:457px;font-size:14.5px;color:#3b7d53;transform:scaleX(0.5577);line-height:16px;height:16px;">V1</span>
<span class="t" style="left:75.00px;top:481px;font-size:10.5px;color:#808080;font-style:italic;transform:scaleX(0.9531);line-height:12px;height:12px;">sexta-feira, 19 de fevereiro de 2021</span>
<span class="t" style="left:236.20px;top:173px;font-size:18px;color:#f4f4f4;font-weight:700;transform:scaleX(0.5439);line-height:20px;height:20px;letter-spacing:1.2px;will-change:transform;">CADASTRO</span>
<span class="t" style="left:355.70px;top:173px;font-size:18px;color:#f4f4f4;font-weight:700;transform:scaleX(0.5498);line-height:20px;height:20px;letter-spacing:1.2px;will-change:transform;">ENTRADA</span>
<span class="t" style="left:470.60px;top:173px;font-size:18px;color:#f4f4f4;font-weight:700;transform:scaleX(0.5482);line-height:20px;height:20px;letter-spacing:1.2px;will-change:transform;">SAÍDA</span>
<span class="t" style="left:562.80px;top:173px;font-size:18px;color:#f4f4f4;font-weight:700;transform:scaleX(0.5297);line-height:20px;height:20px;letter-spacing:1.2px;will-change:transform;">ITENS DO ESTOQUE</span>
<span class="t" style="left:728.70px;top:173px;font-size:18px;color:#f4f4f4;font-weight:700;transform:scaleX(0.5394);line-height:20px;height:20px;letter-spacing:1.2px;will-change:transform;">ANÁLISE POR ITEM</span>
<span class="t" style="left:893.40px;top:173px;font-size:18px;color:#f4f4f4;font-weight:700;transform:scaleX(0.5271);line-height:20px;height:20px;letter-spacing:1.2px;will-change:transform;">SUPORTE</span>
<span class="t" style="left:875.12px;top:175px;font-size:13px;color:#dccb00;font-weight:700;line-height:15px;height:15px;will-change:transform;">?</span>
<span class="t" style="left:4.20px;top:107px;font-size:12px;color:#444444;transform:scaleX(0.9074);line-height:14px;height:14px;">Área de Transf...</span>
<span class="t" style="left:187.00px;top:107px;font-size:12px;color:#444444;transform:scaleX(0.9613);line-height:14px;height:14px;">Fonte</span>
<span class="t" style="left:442.00px;top:107px;font-size:12px;color:#444444;transform:scaleX(0.9847);line-height:14px;height:14px;">Alinhamento</span>
<span class="t" style="left:694.00px;top:107px;font-size:12px;color:#444444;transform:scaleX(0.9488);line-height:14px;height:14px;">Número</span>
<span class="t" style="left:889.60px;top:107px;font-size:12px;color:#444444;transform:scaleX(0.9026);line-height:14px;height:14px;">Estilos</span>
<span class="t" style="left:1074.60px;top:107px;font-size:12px;color:#444444;transform:scaleX(0.9018);line-height:14px;height:14px;">Células</span>
<span class="t" style="left:1233.00px;top:107px;font-size:12px;color:#444444;transform:scaleX(0.9127);line-height:14px;height:14px;">Edição</span>
<span class="t" style="left:21.60px;top:72px;font-size:12px;color:#2e2e2e;transform:scaleX(0.9516);line-height:14px;height:14px;">Colar</span>
<span class="t" style="left:114.50px;top:46px;font-size:12px;color:#2e2e2e;transform:scaleX(0.9848);line-height:14px;height:14px;">Calibri</span>
<span class="t" style="left:225.50px;top:46px;font-size:12px;color:#2e2e2e;transform:scaleX(0.8822);line-height:14px;height:14px;">11</span>
<span class="t" style="left:271.20px;top:45px;font-size:14px;color:#555;transform:scaleX(0.9953);line-height:16px;height:16px;">A</span>
<span class="t" style="left:294.20px;top:48px;font-size:11.5px;color:#555;transform:scaleX(0.9515);line-height:12px;height:12px;">A</span>
<span class="t" style="left:117.40px;top:75px;font-size:13px;color:#2e2e2e;font-weight:700;transform:scaleX(0.9797);line-height:15px;height:15px;">N</span>
<span class="t" style="left:140.97px;top:75px;font-size:13px;color:#2e2e2e;font-weight:700;font-style:italic;font-family:'Liberation Serif', serif;line-height:15px;height:15px;">I</span>
<span class="t" style="left:161.16px;top:75px;font-size:13px;color:#2e2e2e;font-weight:700;line-height:15px;height:15px;">S</span>
<span class="t" style="left:281.50px;top:74px;font-size:14px;color:#5a5a5a;transform:scaleX(1.0809);line-height:16px;height:16px;-webkit-text-stroke:0.35px #5a5a5a;">A</span>
<span class="t" style="left:395.20px;top:43px;font-size:11.5px;color:#555;line-height:12px;height:12px;transform:rotate(-45deg);transform-origin:50% 50%;">ab</span>
<span class="t" style="left:451.00px;top:42px;font-size:11.5px;color:#555;transform:scaleX(0.9143);line-height:12px;height:12px;">ab</span>
<span class="t" style="left:451.00px;top:49px;font-size:11.5px;color:#555;transform:scaleX(0.9565);line-height:12px;height:12px;">c</span>
<span class="t" style="left:468.00px;top:46px;font-size:12px;color:#2e2e2e;transform:scaleX(1.0065);line-height:14px;height:14px;">Quebrar Texto Automaticamente</span>
<span class="t" style="left:468.00px;top:77px;font-size:12px;color:#2e2e2e;transform:scaleX(0.9570);line-height:14px;height:14px;">Mesclar e Centralizar</span>
<span class="t" style="left:660.50px;top:46px;font-size:12px;color:#2e2e2e;transform:scaleX(0.9031);line-height:14px;height:14px;">Geral</span>
<span class="t" style="left:696.00px;top:74px;font-size:15px;color:#555;transform:scaleX(0.9742);line-height:17px;height:17px;">%</span>
<span class="t" style="left:716.60px;top:77px;font-size:10px;color:#444;transform:scaleX(0.8629);line-height:11px;height:11px;">000</span>
<span class="t" style="left:757.00px;top:75px;font-size:7.8px;color:#333;transform:scaleX(1.0360);line-height:9px;height:9px;">0</span>
<span class="t" style="left:749.00px;top:82px;font-size:7.8px;color:#333;transform:scaleX(1.1527);line-height:9px;height:9px;">,00</span>
<span class="t" style="left:771.00px;top:75px;font-size:7.8px;color:#333;transform:scaleX(1.1527);line-height:9px;height:9px;">,00</span>
<span class="t" style="left:776.50px;top:82px;font-size:7.8px;color:#333;transform:scaleX(1.0743);line-height:9px;height:9px;">,0</span>
<span class="t" style="left:839.70px;top:55px;font-size:12px;color:#333;line-height:14px;height:14px;">≠</span>
<span class="t" style="left:804.40px;top:72px;font-size:12px;color:#2e2e2e;transform:scaleX(0.9745);line-height:14px;height:14px;">Formatação</span>
<span class="t" style="left:799.00px;top:88px;font-size:12px;color:#2e2e2e;transform:scaleX(1.0204);line-height:14px;height:14px;">Condicional</span>
<span class="t" style="left:876.50px;top:72px;font-size:12px;color:#2e2e2e;transform:scaleX(0.9931);line-height:14px;height:14px;">Formatar como</span>
<span class="t" style="left:897.50px;top:88px;font-size:12px;color:#2e2e2e;transform:scaleX(0.9187);line-height:14px;height:14px;">Tabela</span>
<span class="t" style="left:963.60px;top:72px;font-size:12px;color:#2e2e2e;transform:scaleX(0.9360);line-height:14px;height:14px;">Estilos de</span>
<span class="t" style="left:967.50px;top:88px;font-size:12px;color:#2e2e2e;transform:scaleX(0.9550);line-height:14px;height:14px;">Célula</span>
<span class="t" style="left:1029.00px;top:72px;font-size:12px;color:#2e2e2e;transform:scaleX(0.9597);line-height:14px;height:14px;">Inserir</span>
<span class="t" style="left:1069.00px;top:72px;font-size:12px;color:#2e2e2e;transform:scaleX(0.9718);line-height:14px;height:14px;">Excluir</span>
<span class="t" style="left:1110.60px;top:72px;font-size:12px;color:#2e2e2e;transform:scaleX(0.9736);line-height:14px;height:14px;">Formatar</span>
<span class="t" style="left:1219.10px;top:37px;font-size:15.5px;color:#3e7ebd;transform:scaleX(1.0538);line-height:17px;height:17px;-webkit-text-stroke:0.35px #3e7ebd;">A</span>
<span class="t" style="left:1220.00px;top:51px;font-size:14.5px;color:#9b4fc1;transform:scaleX(1.0836);line-height:16px;height:16px;-webkit-text-stroke:0.35px #9b4fc1;">Z</span>
<span class="t" style="left:1207.70px;top:72px;font-size:12px;color:#2e2e2e;transform:scaleX(0.9378);line-height:14px;height:14px;">Classificar</span>
<span class="t" style="left:1210.40px;top:88px;font-size:12px;color:#2e2e2e;transform:scaleX(0.9491);line-height:14px;height:14px;">e Filtrar</span>
<span class="t" style="left:1269.20px;top:72px;font-size:12px;color:#2e2e2e;transform:scaleX(0.9443);line-height:14px;height:14px;">Localizar e</span>
<span class="t" style="left:1265.50px;top:88px;font-size:12px;color:#2e2e2e;transform:scaleX(0.9329);line-height:14px;height:14px;">Selecionar</span>
<span class="t" style="left:12.30px;top:140px;font-size:12px;color:#2e2e2e;transform:scaleX(1.0349);line-height:14px;height:14px;">A1</span>
<span class="t" style="left:222.30px;top:138px;font-size:14.5px;color:#555;font-weight:700;font-style:italic;font-family:'Liberation Serif', serif;line-height:16px;height:16px;">f</span>
<span class="t" style="left:227.40px;top:143px;font-size:10.5px;color:#555;font-weight:700;font-style:italic;font-family:'Liberation Serif', serif;line-height:11px;height:11px;">x</span>
<span class="t" style="left:7.30px;top:676px;font-size:12px;color:#2e2e2e;transform:scaleX(0.9814);line-height:14px;height:14px;">Pronto</span>
<span class="t" style="left:1337.40px;top:676px;font-size:12px;color:#2e2e2e;transform:scaleX(0.8364);line-height:14px;height:14px;">80%</span>
<span class="t" style="left:36.66px;top:182px;font-size:7px;color:#fff;font-weight:700;line-height:7px;height:7px;">X</span>
<span class="t" style="left:56.80px;top:187px;font-size:7.6px;color:#558f58;font-weight:700;transform:scaleX(0.8952);line-height:9px;height:9px;">EXCEL DA LOGÍSTICA</span>
<span class="t" style="left:63.00px;top:198px;font-size:3.8px;color:#555;transform:scaleX(0.9279);line-height:4px;height:4px;">SOLUÇÕES LOGÍSTICAS EM EXCEL</span>
<span class="t" style="left:926.50px;top:224px;font-size:5.4px;color:#222;font-weight:700;font-family:'DejaVu Sans Mono', 'Liberation Mono', monospace;transform:scaleX(1.5046);line-height:6px;height:6px;">ESCOLHA O ANO</span>
</body></html>
